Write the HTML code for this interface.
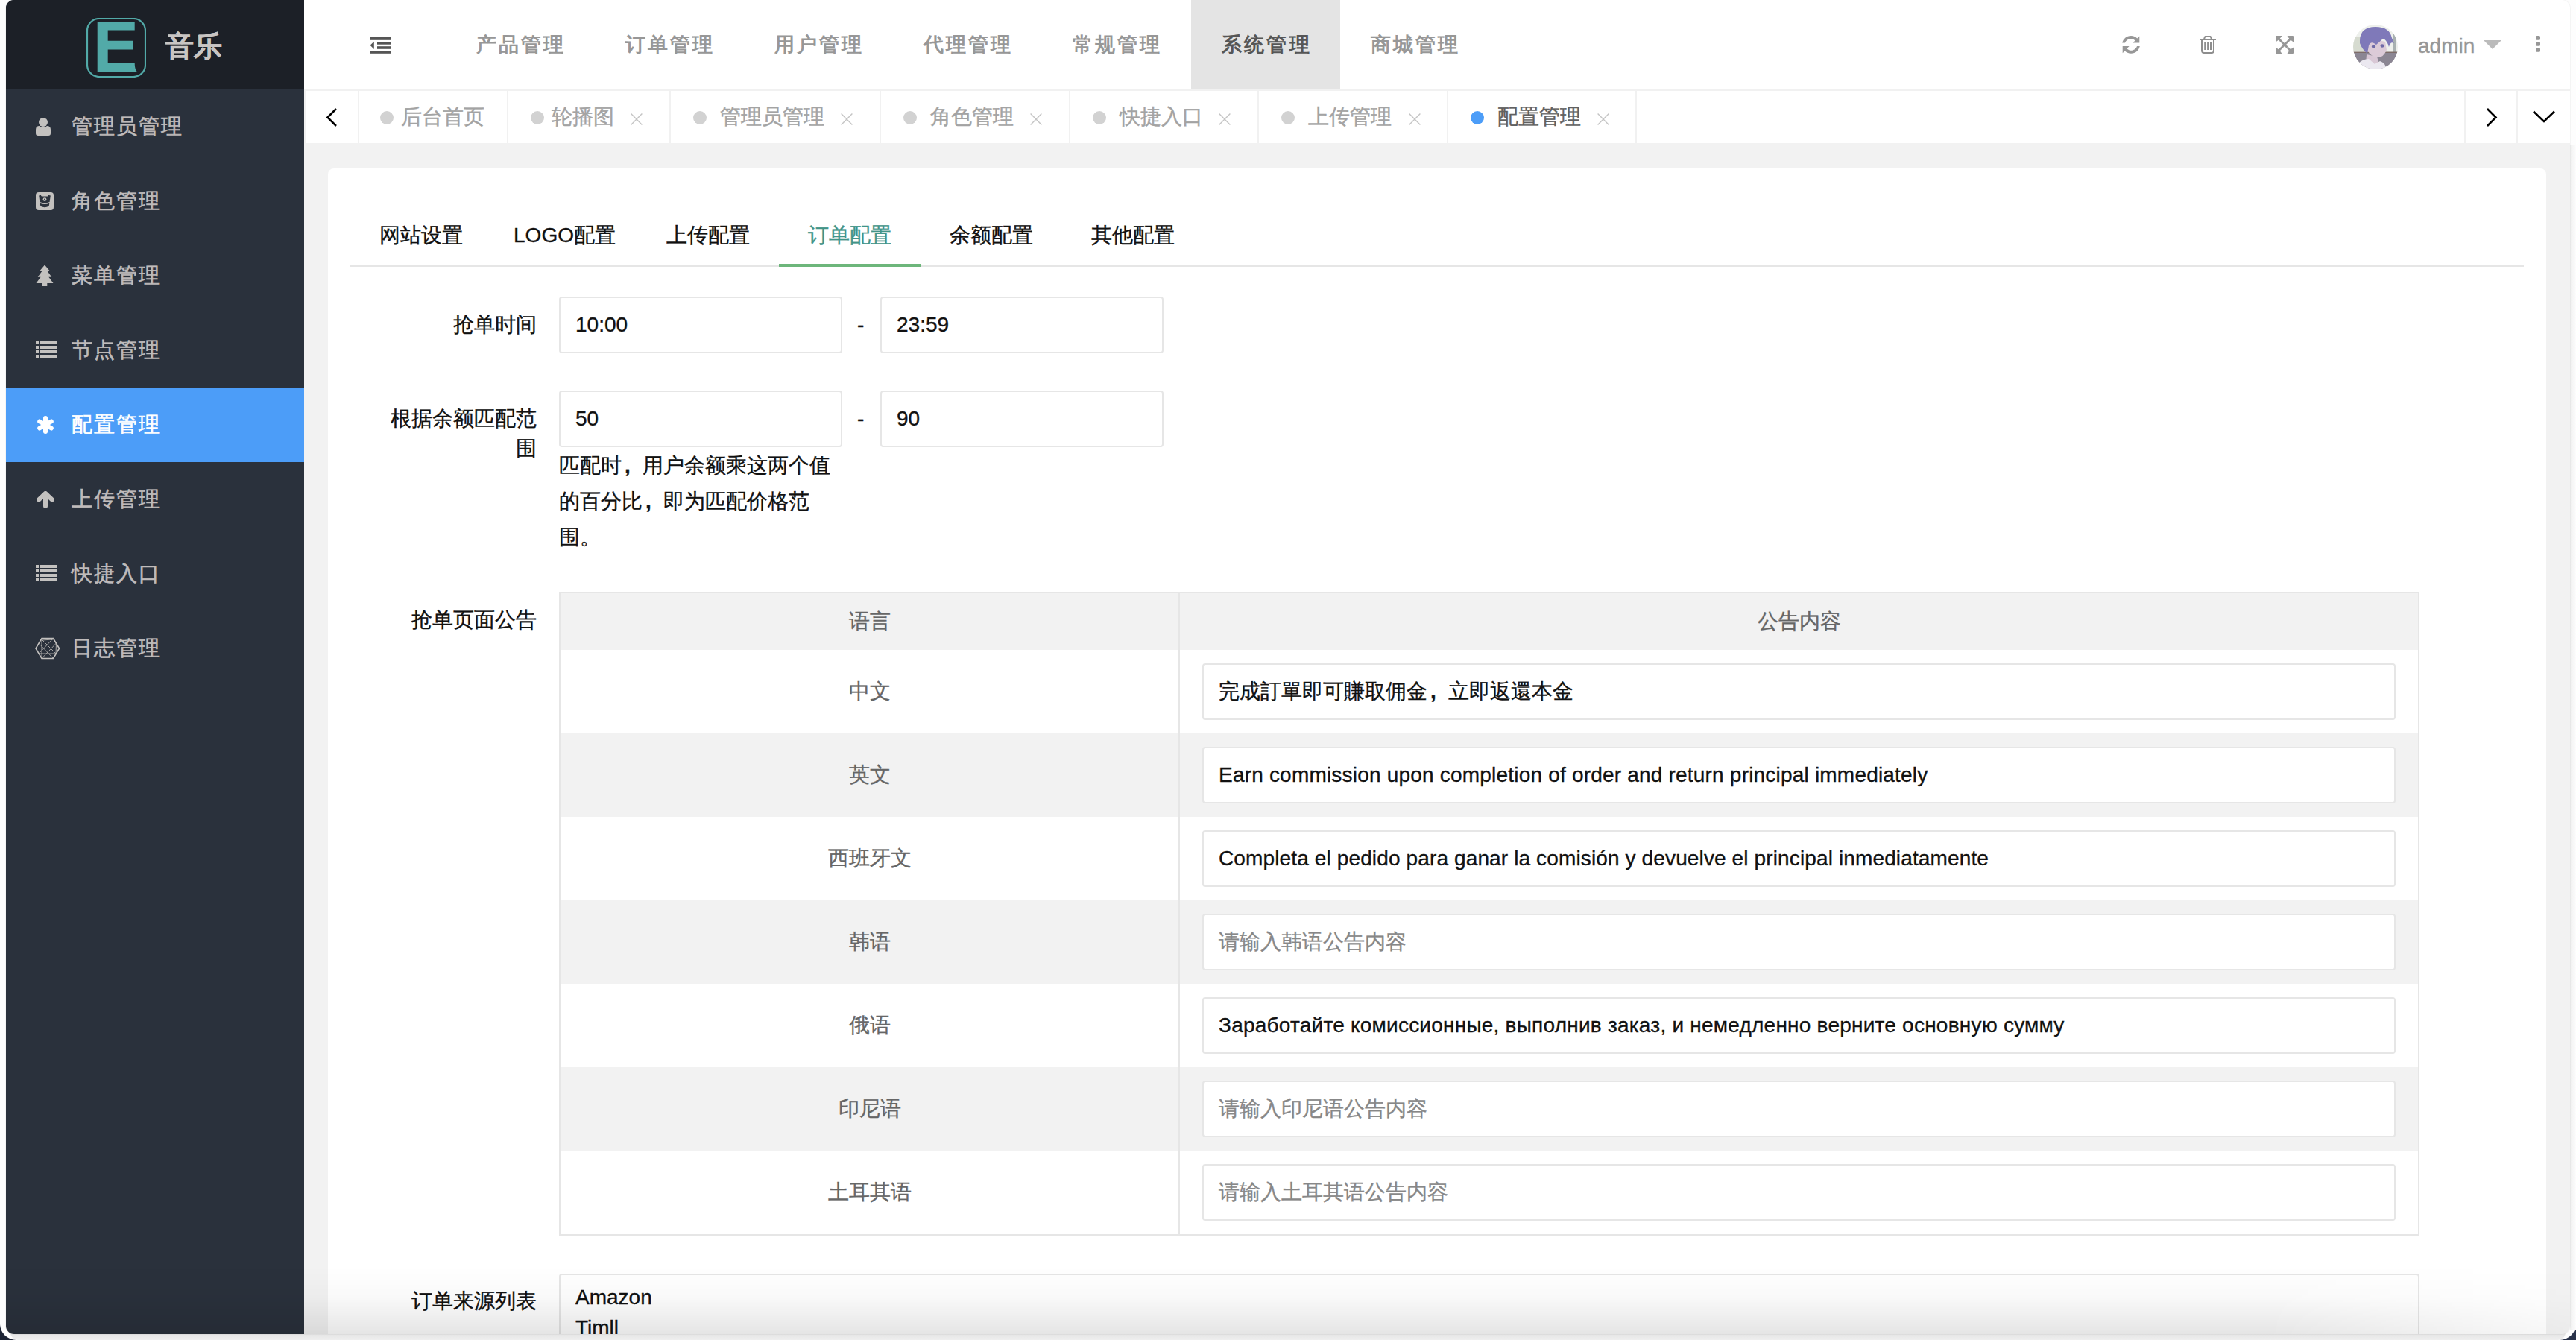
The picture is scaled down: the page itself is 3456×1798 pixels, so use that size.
<!DOCTYPE html>
<html><head><meta charset="utf-8">
<style>
*{box-sizing:border-box;margin:0;padding:0}
html,body{width:3456px;height:1798px;overflow:hidden;background:#fdfdfd;font-family:"Liberation Sans",sans-serif;font-size:28px;line-height:40px;color:#111;-webkit-text-stroke:0.35px currentColor}
.a{position:absolute;white-space:nowrap}
#corner-bl{position:absolute;left:0;top:1760px;width:40px;height:38px;background:#1b2233}
#corner-br{position:absolute;left:3416px;top:1760px;width:40px;height:38px;background:#29324a}
#frame{position:absolute;left:0;top:0;width:3456px;height:1798px;background:#fdfdfd;border-radius:0 0 22px 22px}
#botstrip{position:absolute;left:14px;top:1788px;width:3428px;height:10px;background:linear-gradient(#e2e2e2,#efefef);border-radius:0 0 12px 12px}
#win{position:absolute;left:8px;top:0;width:3440px;height:1790px;border-radius:11px;overflow:hidden;background:#f2f2f2;box-shadow:0 0 0 1px rgba(0,0,0,0.035)}
#win .in{position:absolute;left:-8px;top:0;width:3456px;height:1798px}
#side{position:absolute;left:0;top:0;width:408px;height:1798px;background:#2a313c}
#logo{position:absolute;left:0;top:0;width:408px;height:120px;background:#1c2027}
#hdr{position:absolute;left:408px;top:0;width:3048px;height:120px;background:#fff}
#hline{position:absolute;left:408px;top:120px;width:3048px;height:2px;background:#f1f1f1}
#tabbar{position:absolute;left:408px;top:122px;width:3048px;height:70px;background:#fff}
.dv{position:absolute;top:122px;width:2px;height:70px;background:#f1f1f1}
#card{position:absolute;left:440px;top:226px;width:2976px;height:1700px;background:#fff;border-radius:8px}
.mi{color:#bfbbbb;letter-spacing:2px;-webkit-text-stroke:0.6px currentColor}
.nav{color:#979797;font-weight:bold;font-size:27px;letter-spacing:3.2px;-webkit-text-stroke:0}
.tb{color:#a3a3a3;-webkit-text-stroke:0.4px currentColor}
.dot{position:absolute;width:18px;height:18px;border-radius:50%;background:#d2d2d2;top:149px}
.cls{position:absolute;top:152px;width:16px;height:16px}
.inp{position:absolute;border:2px solid #e6e6e6;border-radius:4px;background:#fff}
.ph{color:#878787}
.lbl{text-align:right}
.gray{color:#666}
.cm{display:inline-block;width:28px;font-weight:bold;text-indent:4px}
#shade{position:absolute;left:0;top:1700px;width:3456px;height:90px;-webkit-mask-image:linear-gradient(to right,#000 0%,#000 88%,rgba(0,0,0,0.25) 100%);background:linear-gradient(rgba(0,0,0,0) 0%,rgba(0,0,0,0.025) 45%,rgba(0,0,0,0.1) 100%)}
</style></head><body>
<div id="frame"></div>
<div id="corner-bl"></div><div id="corner-br"></div>
<div id="frame2" style="position:absolute;left:0;top:0;width:3456px;height:1798px;background:#fdfdfd;border-radius:0 0 22px 22px"></div>
<div id="botstrip"></div>
<div style="position:absolute;left:3448px;top:194px;width:8px;height:1590px;background:linear-gradient(to right,#f0f0f0,#fdfdfd)"></div>

<div id="win"><div class="in">
  <div id="side"></div>
  <div id="logo"></div>
  <div id="hdr"></div>
  <div id="hline"></div>
  <div id="tabbar"></div>
  <div id="card"></div>
  
  <svg class="a" style="left:116px;top:24px" width="80" height="80" viewBox="0 0 80 80">
    <rect x="1" y="1" width="78" height="78" rx="16" ry="16" fill="none" stroke="#52aaa8" stroke-width="2.2"/>
    <path d="M14.7 5 H64.7 V16.6 H28.7 V30.8 H62.1 V42.5 H28.7 V60.7 H64.7 C64.7 66 65.6 69.5 68 72.4 H14.7 Z" fill="#52aaa8"/>
  </svg>
  <div class="a" style="left:222px;top:32px;font-size:38px;line-height:60px;font-weight:bold;color:#c8c5c3">音乐</div>
  <div class="a" style="left:8px;top:520px;width:400px;height:100px;background:#4c9df8"></div>
  <!-- icons -->
  <svg class="a" style="left:47px;top:157px" width="22" height="26" viewBox="0 0 22 26">
    <circle cx="11" cy="7" r="6" fill="#c3c1bf"/>
    <path d="M1 17 Q1 12 6 12 Q8 14 11 14 Q14 14 16 12 Q21 12 21 17 V22 Q21 25 18 25 H4 Q1 25 1 22 Z" fill="#c3c1bf"/>
  </svg>
  <svg class="a" style="left:48px;top:258px" width="24" height="24" viewBox="0 0 24 24">
    <rect x="0" y="0" width="24" height="24" rx="4" fill="#c3c1bf"/>
    <path d="M4.2 4.6 Q12 1.4 19.8 4.6 L18.6 13 Q12 15.6 5.4 13 Z" fill="#2a313c"/>
    <ellipse cx="12" cy="4.4" rx="5" ry="1.2" fill="#c3c1bf"/>
    <circle cx="12" cy="9.6" r="2.4" fill="#c3c1bf"/><circle cx="12" cy="9.6" r="1" fill="#2a313c"/>
    <path d="M5.6 14.8 Q12 17.4 18.4 14.8 L17.6 18.8 Q12 21.6 6.4 18.8 Z" fill="#2a313c"/>
  </svg>
  <svg class="a" style="left:48px;top:355px" width="24" height="30" viewBox="0 0 24 30">
    <path d="M12 0.6 L19 8.8 H15.6 L21.3 16.8 H17.4 L23.5 25 H15.3 V29 H8.8 V25 H0.5 L6.6 16.8 H2.7 L8.4 8.8 H5 Z" fill="#c3c1bf"/>
  </svg>
  <svg class="a" style="left:48px;top:458px" width="28" height="22" viewBox="0 0 28 22">
    <g fill="#c3c1bf"><rect x="0" y="0" width="4" height="4"/><rect x="6" y="0" width="22" height="4"/>
    <rect x="0" y="6" width="4" height="4"/><rect x="6" y="6" width="22" height="4"/>
    <rect x="0" y="12" width="4" height="4"/><rect x="6" y="12" width="22" height="4"/>
    <rect x="0" y="18" width="4" height="4"/><rect x="6" y="18" width="22" height="4"/></g>
  </svg>
  <svg class="a" style="left:49px;top:558px" width="24" height="24" viewBox="0 0 24 24">
    <g stroke="#fff" stroke-width="6" stroke-linecap="round"><line x1="12" y1="3" x2="12" y2="21"/>
    <line x1="4.2" y1="7.5" x2="19.8" y2="16.5"/><line x1="4.2" y1="16.5" x2="19.8" y2="7.5"/></g>
  </svg>
  <svg class="a" style="left:49px;top:659px" width="24" height="24" viewBox="0 0 24 24">
    <g stroke="#c3c1bf" stroke-width="6" stroke-linecap="round" stroke-linejoin="round" fill="none"><line x1="12" y1="4" x2="12" y2="20"/>
    <polyline points="3,11.5 12,3 21,11.5"/></g>
  </svg>
  <svg class="a" style="left:48px;top:758px" width="28" height="22" viewBox="0 0 28 22">
    <g fill="#c3c1bf"><rect x="0" y="0" width="4" height="4"/><rect x="6" y="0" width="22" height="4"/>
    <rect x="0" y="6" width="4" height="4"/><rect x="6" y="6" width="22" height="4"/>
    <rect x="0" y="12" width="4" height="4"/><rect x="6" y="12" width="22" height="4"/>
    <rect x="0" y="18" width="4" height="4"/><rect x="6" y="18" width="22" height="4"/></g>
  </svg>
  <svg class="a" style="left:47px;top:855px" width="34" height="30" viewBox="0 0 34 30">
    <g fill="none" stroke="#c3c1bf" stroke-width="1.6">
    <polygon points="9,1.5 24.5,1.5 32.5,15 24.5,28.5 9,28.5 1,15"/></g>
    <g fill="none" stroke="#b4b2b0" stroke-width="0.9">
    <line x1="9" y1="1.5" x2="9" y2="28.5"/><line x1="24.5" y1="1.5" x2="5" y2="22"/><line x1="9" y1="3" x2="28" y2="22"/>
    <line x1="5" y1="22" x2="28" y2="22"/><line x1="5" y1="8" x2="24.5" y2="28.5"/><line x1="28.5" y1="8" x2="9" y2="28.5"/>
    <line x1="9" y1="4" x2="24.5" y2="3"/><line x1="28.5" y1="8" x2="28" y2="22"/></g>
  </svg>
  <div class="a mi" style="left:96px;top:150px">管理员管理</div>
  <div class="a mi" style="left:96px;top:250px">角色管理</div>
  <div class="a mi" style="left:96px;top:350px">菜单管理</div>
  <div class="a mi" style="left:96px;top:450px">节点管理</div>
  <div class="a mi" style="left:96px;top:550px;color:#fff">配置管理</div>
  <div class="a mi" style="left:96px;top:650px">上传管理</div>
  <div class="a mi" style="left:96px;top:750px">快捷入口</div>
  <div class="a mi" style="left:96px;top:850px">日志管理</div>

  
  <svg class="a" style="left:496px;top:50px" width="28" height="22" viewBox="0 0 28 22">
    <g fill="#555"><rect x="0" y="0" width="28" height="3.8"/><rect x="10" y="6.1" width="18" height="3.6"/>
    <rect x="10" y="12.2" width="18" height="3.6"/><rect x="0" y="18" width="28" height="3.8"/>
    <polygon points="0.6,10.8 5.8,5.8 5.8,15.9"/></g>
  </svg>
  <div class="a" style="left:1598px;top:0;width:200px;height:120px;background:#e4e4e4"></div>
  <div class="a nav" style="left:638.5px;top:40px">产品管理</div>
  <div class="a nav" style="left:838.5px;top:40px">订单管理</div>
  <div class="a nav" style="left:1038.5px;top:40px">用户管理</div>
  <div class="a nav" style="left:1238.5px;top:40px">代理管理</div>
  <div class="a nav" style="left:1438.5px;top:40px">常规管理</div>
  <div class="a nav" style="left:1639px;top:40px;color:#565656">系统管理</div>
  <div class="a nav" style="left:1838.5px;top:40px">商城管理</div>
  <svg class="a" style="left:2847px;top:48px" width="24" height="24" viewBox="0 0 24 24">
    <path fill="#979797" d="M0.2 9.6 C1.4 4.2 6 0 12 0 C15.3 0 18.2 1.4 20.3 3.5 L23.3 0.6 V9.6 H14.4 L17.5 6.4 C16.1 5 14.1 4 12 4 C8.2 4 5.1 6.4 4 9.6 Z"/>
    <path fill="#979797" d="M23.8 14 C22.6 19.6 18 23.8 12 23.8 C8.7 23.8 5.8 22.4 3.7 20.3 L0.7 23.2 V14 H9.6 L6.5 17.2 C7.9 18.7 9.9 19.8 12 19.8 C15.8 19.8 18.9 17.4 20 14 Z"/>
  </svg>
  <svg class="a" style="left:2951px;top:48px" width="22" height="24" viewBox="0 0 22 24">
    <g fill="none" stroke="#8e8e8e" stroke-width="2">
      <path d="M0 5 H22"/><path d="M6 4.5 L7 1.6 Q7.5 0.8 8.5 0.8 H13.5 Q14.5 0.8 15 1.6 L16 4.5"/>
      <path d="M3 5 V19.5 Q3 23 6 23 H16 Q19 23 19 19.5 V5"/>
    </g>
    <g fill="#8e8e8e"><rect x="6.2" y="9" width="2" height="10"/><rect x="10.1" y="9" width="2" height="10"/><rect x="14" y="9" width="2" height="10"/></g>
  </svg>
  <svg class="a" style="left:3053px;top:48px" width="24" height="24" viewBox="0 0 24 24">
    <g fill="#979797">
      <path d="M0 1 Q0 0 1 0 H8.5 L5.8 3.8 L9.5 7.5 L7.5 9.5 L3.8 5.8 L0 8.5 Z"/>
      <path d="M24 1 Q24 0 23 0 H15.5 L18.2 3.8 L14.5 7.5 L16.5 9.5 L20.2 5.8 L24 8.5 Z"/>
      <path d="M0 23 Q0 24 1 24 H8.5 L5.8 20.2 L9.5 16.5 L7.5 14.5 L3.8 18.2 L0 15.5 Z"/>
      <path d="M24 23 Q24 24 23 24 H15.5 L18.2 20.2 L14.5 16.5 L16.5 14.5 L20.2 18.2 L24 15.5 Z"/>
      <path d="M7.5 9.5 L9.5 7.5 L12 10 L14.5 7.5 L16.5 9.5 L14 12 L16.5 14.5 L14.5 16.5 L12 14 L9.5 16.5 L7.5 14.5 L10 12 Z"/>
    </g>
  </svg>
  <svg class="a" style="left:3157px;top:33px" width="60" height="60" viewBox="0 0 60 60">
    <defs><clipPath id="cc"><circle cx="30" cy="30" r="30"/></clipPath></defs>
    <g clip-path="url(#cc)">
      <rect x="0" y="0" width="60" height="38" fill="#eef0ec"/>
      <rect x="0" y="16" width="16" height="20" fill="#d6dbd0"/>
      <rect x="53" y="10" width="5" height="34" fill="#a9b1b1"/>
      <rect x="0" y="36.5" width="60" height="1.6" fill="#7d6c68"/>
      <rect x="0" y="38" width="60" height="22" fill="#8b8693"/>
      <path d="M18 40 L32 43 L35 53 L17 53 Z" fill="#d9c8d6"/>
      <path d="M4 60 L7 52 Q13 46 21 46 L29 53 L36 49 Q43 51 45 60 Z" fill="#ebe8f0"/>
      <path d="M19 23 Q30 19 43 23 L45 34 Q41 44 33 44 Q24 43 20 36 Z" fill="#dccbd8"/>
      <path d="M9 22 Q9 3 30 3 Q49 3 52 18 L55 25 Q50 22 48 30 Q45 20 40 19 L31 27 Q24 21 21 28 L19 39 Q12 33 9 25 Z" fill="#7f79b9"/>
      <ellipse cx="27.5" cy="29.5" rx="2.6" ry="2.2" fill="#6f6aa6"/><ellipse cx="39" cy="28.5" rx="2.4" ry="2.2" fill="#6f6aa6"/>
    </g>
  </svg>
  <div class="a" style="left:3244px;top:42px;color:#979797">admin</div>
  <svg class="a" style="left:3332px;top:54px" width="24" height="12" viewBox="0 0 24 12"><polygon points="0,0 24,0 12,12" fill="#bbb"/></svg>
  <svg class="a" style="left:3402px;top:48px" width="6" height="22" viewBox="0 0 6 22">
    <g fill="#979797"><rect x="0" y="0" width="6" height="5.8" rx="1.6"/><rect x="0" y="8" width="6" height="5.8" rx="1.6"/><rect x="0" y="16" width="6" height="5.8" rx="1.6"/></g>
  </svg>

  
  <div class="dv" style="left:408px"></div>
  <div class="dv" style="left:480px"></div>
  <div class="dv" style="left:680px"></div>
  <div class="dv" style="left:898px"></div>
  <div class="dv" style="left:1180px"></div>
  <div class="dv" style="left:1434px"></div>
  <div class="dv" style="left:1687px"></div>
  <div class="dv" style="left:1941px"></div>
  <div class="dv" style="left:2194px"></div>
  <div class="dv" style="left:3306px"></div>
  <div class="dv" style="left:3376px"></div>
  <svg class="a" style="left:437px;top:145px" width="16" height="25" viewBox="0 0 16 25"><path d="M14 1 L2.5 12.5 L14 24" fill="none" stroke="#000" stroke-width="2.6"/></svg>
  <svg class="a" style="left:3335px;top:145px" width="16" height="25" viewBox="0 0 16 25"><path d="M2 1 L13.5 12.5 L2 24" fill="none" stroke="#000" stroke-width="2.6"/></svg>
  <svg class="a" style="left:3398px;top:148px" width="30" height="17" viewBox="0 0 30 17"><path d="M1 1.5 L15 15 L29 1.5" fill="none" stroke="#000" stroke-width="2.6"/></svg>
  <div class="dot" style="left:510px"></div><div class="a tb" style="left:538px;top:137px">后台首页</div>
  <div class="dot" style="left:712px"></div><div class="a tb" style="left:740px;top:137px">轮播图</div><svg class="a cls" style="left:846px" width="16" height="16" viewBox="0 0 16 16"><path d="M0.6 0.6 L15.4 15.4 M15.4 0.6 L0.6 15.4" stroke="#c4c4c4" stroke-width="1.4"/></svg>
  <div class="dot" style="left:930px"></div><div class="a tb" style="left:966px;top:137px">管理员管理</div><svg class="a cls" style="left:1128px" width="16" height="16" viewBox="0 0 16 16"><path d="M0.6 0.6 L15.4 15.4 M15.4 0.6 L0.6 15.4" stroke="#c4c4c4" stroke-width="1.4"/></svg>
  <div class="dot" style="left:1212px"></div><div class="a tb" style="left:1248px;top:137px">角色管理</div><svg class="a cls" style="left:1382px" width="16" height="16" viewBox="0 0 16 16"><path d="M0.6 0.6 L15.4 15.4 M15.4 0.6 L0.6 15.4" stroke="#c4c4c4" stroke-width="1.4"/></svg>
  <div class="dot" style="left:1466px"></div><div class="a tb" style="left:1502px;top:137px">快捷入口</div><svg class="a cls" style="left:1635px" width="16" height="16" viewBox="0 0 16 16"><path d="M0.6 0.6 L15.4 15.4 M15.4 0.6 L0.6 15.4" stroke="#c4c4c4" stroke-width="1.4"/></svg>
  <div class="dot" style="left:1719px"></div><div class="a tb" style="left:1755px;top:137px">上传管理</div><svg class="a cls" style="left:1890px" width="16" height="16" viewBox="0 0 16 16"><path d="M0.6 0.6 L15.4 15.4 M15.4 0.6 L0.6 15.4" stroke="#c4c4c4" stroke-width="1.4"/></svg>
  <div class="dot" style="left:1973px;background:#4c9df8"></div><div class="a tb" style="left:2009px;top:137px;color:#606060">配置管理</div><svg class="a cls" style="left:2143px" width="16" height="16" viewBox="0 0 16 16"><path d="M0.6 0.6 L15.4 15.4 M15.4 0.6 L0.6 15.4" stroke="#c4c4c4" stroke-width="1.4"/></svg>

  
  <div class="a" style="left:470px;top:356px;width:2916px;height:2px;background:#e6e6e6"></div>
  <div class="a" style="left:1045px;top:354px;width:190px;height:4px;background:#6db67b"></div>
  <div class="a" style="left:470px;top:296px;width:190px;text-align:center">网站设置</div>
  <div class="a" style="left:660px;top:296px;width:195px;text-align:center">LOGO配置</div>
  <div class="a" style="left:855px;top:296px;width:190px;text-align:center">上传配置</div>
  <div class="a" style="left:1045px;top:296px;width:190px;text-align:center;color:#429488">订单配置</div>
  <div class="a" style="left:1235px;top:296px;width:190px;text-align:center">余额配置</div>
  <div class="a" style="left:1425px;top:296px;width:190px;text-align:center">其他配置</div>

  <div class="a lbl" style="left:500px;top:416px;width:220px">抢单时间</div>
  <div class="inp" style="left:750px;top:398px;width:380px;height:76px"></div>
  <div class="a" style="left:772px;top:416px">10:00</div>
  <div class="a" style="left:1150px;top:416px">-</div>
  <div class="inp" style="left:1181px;top:398px;width:380px;height:76px"></div>
  <div class="a" style="left:1203px;top:416px">23:59</div>

  <div class="a lbl" style="left:500px;top:542px;width:220px">根据余额匹配范</div>
  <div class="a lbl" style="left:500px;top:582px;width:220px">围</div>
  <div class="inp" style="left:750px;top:524px;width:380px;height:76px"></div>
  <div class="a" style="left:772px;top:542px">50</div>
  <div class="a" style="left:1150px;top:542px">-</div>
  <div class="inp" style="left:1181px;top:524px;width:380px;height:76px"></div>
  <div class="a" style="left:1203px;top:542px">90</div>
  <div class="a" style="left:750px;top:601px;line-height:48px;white-space:normal;width:380px">匹配时<span class="cm">,</span>用户余额乘这两个值的百分比<span class="cm">,</span>即为匹配价格范围。</div>

  <div class="a lbl" style="left:500px;top:812px;width:220px">抢单页面公告</div>
  <div class="a" style="left:750px;top:794px;width:2496px;height:864px;border:2px solid #e6e6e6;background:#fff"></div>
  <div class="a" style="left:752px;top:796px;width:2492px;height:76px;background:#f2f2f2"></div>
  <div class="a" style="left:752px;top:872px;width:2492px;height:112px;background:#fff"></div>
<div class="a gray" style="left:752px;top:908px;width:829px;text-align:center">中文</div>
<div class="inp" style="left:1613px;top:890px;width:1601px;height:76px"></div>
<div class="a" style="left:1635px;top:908px">完成訂單即可賺取佣金<span class="cm">,</span>立即返還本金</div>
<div class="a" style="left:752px;top:984px;width:2492px;height:112px;background:#f2f2f2"></div>
<div class="a gray" style="left:752px;top:1020px;width:829px;text-align:center">英文</div>
<div class="inp" style="left:1613px;top:1002px;width:1601px;height:76px"></div>
<div class="a" style="left:1635px;top:1020px;letter-spacing:0.2px">Earn commission upon completion of order and return principal immediately</div>
<div class="a" style="left:752px;top:1096px;width:2492px;height:112px;background:#fff"></div>
<div class="a gray" style="left:752px;top:1132px;width:829px;text-align:center">西班牙文</div>
<div class="inp" style="left:1613px;top:1114px;width:1601px;height:76px"></div>
<div class="a" style="left:1635px;top:1132px;letter-spacing:0.13px">Completa el pedido para ganar la comisión y devuelve el principal inmediatamente</div>
<div class="a" style="left:752px;top:1208px;width:2492px;height:112px;background:#f2f2f2"></div>
<div class="a gray" style="left:752px;top:1244px;width:829px;text-align:center">韩语</div>
<div class="inp" style="left:1613px;top:1226px;width:1601px;height:76px"></div>
<div class="a ph" style="left:1635px;top:1244px">请输入韩语公告内容</div>
<div class="a" style="left:752px;top:1320px;width:2492px;height:112px;background:#fff"></div>
<div class="a gray" style="left:752px;top:1356px;width:829px;text-align:center">俄语</div>
<div class="inp" style="left:1613px;top:1338px;width:1601px;height:76px"></div>
<div class="a" style="left:1635px;top:1356px;letter-spacing:0.23px">Заработайте комиссионные, выполнив заказ, и немедленно верните основную сумму</div>
<div class="a" style="left:752px;top:1432px;width:2492px;height:112px;background:#f2f2f2"></div>
<div class="a gray" style="left:752px;top:1468px;width:829px;text-align:center">印尼语</div>
<div class="inp" style="left:1613px;top:1450px;width:1601px;height:76px"></div>
<div class="a ph" style="left:1635px;top:1468px">请输入印尼语公告内容</div>
<div class="a" style="left:752px;top:1544px;width:2492px;height:112px;background:#fff"></div>
<div class="a gray" style="left:752px;top:1580px;width:829px;text-align:center">土耳其语</div>
<div class="inp" style="left:1613px;top:1562px;width:1601px;height:76px"></div>
<div class="a ph" style="left:1635px;top:1580px">请输入土耳其语公告内容</div>

  <div class="a" style="left:1581px;top:796px;width:2px;height:860px;background:#e6e6e6"></div>
  <div class="a gray" style="left:752px;top:814px;width:829px;text-align:center">语言</div>
  <div class="a gray" style="left:1583px;top:814px;width:1661px;text-align:center">公告内容</div>

  <div class="a lbl" style="left:500px;top:1726px;width:220px">订单来源列表</div>
  <div class="inp" style="left:750px;top:1709px;width:2496px;height:200px"></div>
  <div class="a" style="left:772px;top:1721px">Amazon</div>
  <div class="a" style="left:772px;top:1762px">Timll</div>

  <div id="shade"></div>
  
</div></div>

</body></html>
